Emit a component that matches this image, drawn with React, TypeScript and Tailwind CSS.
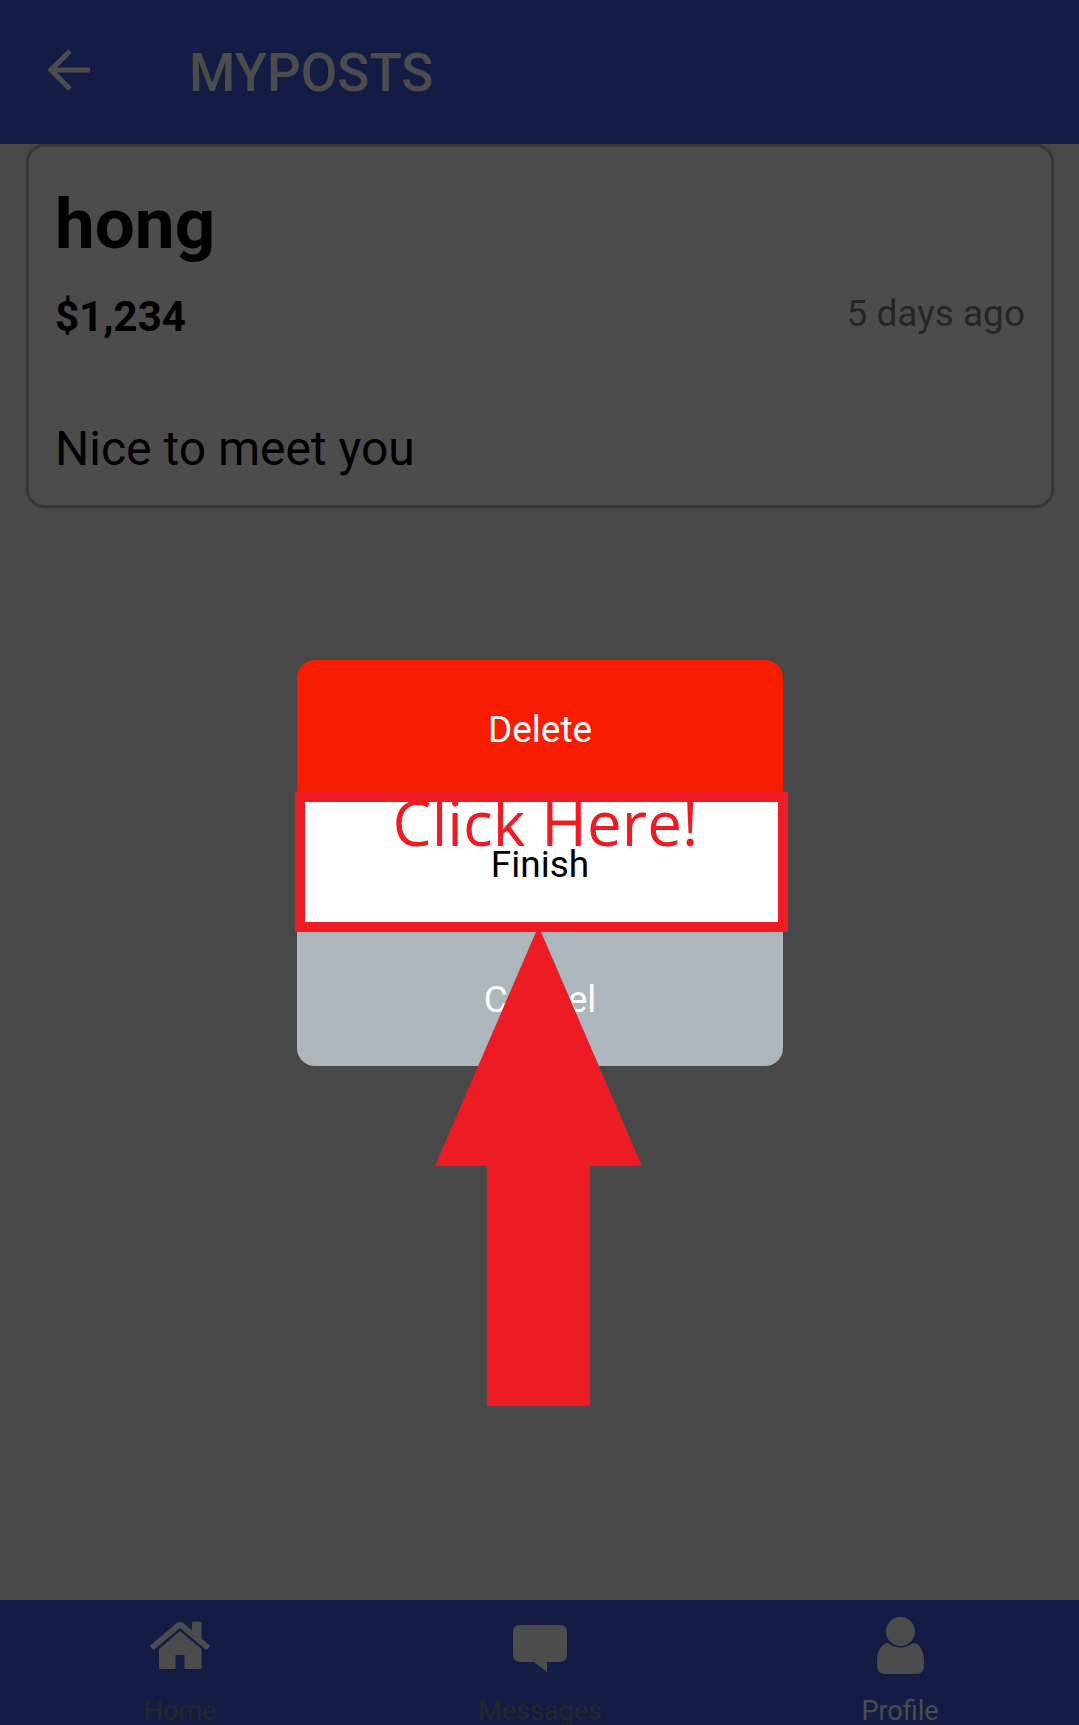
import type { ReactNode } from "react";

function BackIcon() {
  return (
    <svg viewBox="0 0 44 42" className="h-[42px] w-11" fill="none" stroke="currentColor" strokeWidth="5" aria-hidden="true">
      <path d="M43 21H5M23 2L4 21L23 40" />
    </svg>
  );
}

function HomeIcon() {
  return (
    <svg viewBox="0 0 60 60" className="size-[60px] shrink-0" fill="currentColor" aria-hidden="true">
      <path d="M26.5 7.2Q30 4.6 33.500 7.200L42 14.500V7Q42 5.500 43.500 5.500H50Q51.500 5.500 51.500 7V22.500L59.500 29.300Q60.300 30 59.600 30.800L57.200 33.500Q56.500 34.200 55.700 33.500L30 12L4.300 33.500Q3.500 34.200 2.800 33.500L0.400 30.800Q-0.300 30 0.500 29.300Z" />
      <path d="M30 15L51.500 33V51.500Q51.500 53 50 53H34.500V39H25.500V53H10.500Q9 53 9 51.500V33Z" />
    </svg>
  );
}

function MessageIcon() {
  return (
    <svg viewBox="0 0 60 60" className="size-[60px] shrink-0" fill="currentColor" aria-hidden="true">
      <path d="M10 9H50Q57 9 57 16V39Q57 46 50 46H37V56L24 46H10Q3 46 3 39V16Q3 9 10 9Z" />
    </svg>
  );
}

function ProfileIcon() {
  return (
    <svg viewBox="0 0 60 60" className="size-[60px] shrink-0" fill="currentColor" aria-hidden="true">
      <circle cx="30.500" cy="15.500" r="14.500" />
      <path d="M18 27Q30.500 36 43 27C49.500 27.500 54 35 54 45V49Q54 58 46 58H15Q7 58 7 49V45C7 35 11.500 27.500 18 27Z" />
    </svg>
  );
}

function Tab({ label, icon, active = false }: { label: string; icon: ReactNode; active?: boolean }) {
  return (
    <a href="#" aria-current={active ? "page" : undefined} className="flex flex-1 flex-col items-center gap-[19px] pt-4 text-[#4c4c4c]">
      {icon}
      <span className={active ? "text-[27px] leading-8" : "text-[27px] leading-8 text-[#262626]"}>{label}</span>
    </a>
  );
}

function ActionDialog() {
  return (
    <div className="fixed top-0 bottom-0 left-0 -right-px flex items-center justify-center">
      <div role="dialog" aria-label="Post actions" className="flex w-[45%] flex-col text-[37px] leading-[43px]">
        <button className="rounded-t-[18px] bg-[#f61d00] pt-12 pb-11 text-white">Delete</button>
        <div className="relative flex flex-col">
          <button className="bg-white pt-12 pb-11 text-black">Finish</button>
          <div className="pointer-events-none absolute -top-[3px] -right-[5px] -bottom-0.5 -left-0.5 z-10 border-10 border-[#ed1c24]">
            <p className="-mt-[22px] pl-2 text-center font-['Open_Sans',sans-serif] text-[62px] leading-[84px] text-[#ed1c24]">
              Click Here!
            </p>
            <svg viewBox="0 0 208 480" className="absolute top-full left-1/2 mt-1 h-[480px] w-52 -translate-x-[107px]" fill="#ed1c24" aria-hidden="true">
              <path d="M103.500 0L207 240H155V480H52V240H0Z" />
            </svg>
          </div>
        </div>
        <button className="rounded-b-[18px] bg-[#adb5bd] pt-12 pb-[45px] text-white">Cancel</button>
      </div>
    </div>
  );
}

export default function App() {
  return (
    <div className="h-screen overflow-hidden font-[Roboto,sans-serif] text-black">
      <div className="-mr-px flex h-full flex-col bg-[#484848]">
        <header className="flex h-36 shrink-0 items-center gap-[98px] bg-[#141c46] px-[47px] text-[#4c4c4c]">
          <button aria-label="Back" className="-mt-1">
            <BackIcon />
          </button>
          <h1 className="pt-0.5 text-[53px] leading-[62px] font-medium">MYPOSTS</h1>
        </header>
        <main className="flex-1 px-[26px]">
          <article className="rounded-[18px] border-3 border-[#35393b] bg-[#4c4c4c] px-[26px] pt-[35px] pb-[26px]">
            <h2 className="text-[71px] leading-[84px] font-bold">hong</h2>
            <div className="mt-[25px] flex items-start justify-between">
              <strong className="text-[42px] leading-[52px] font-bold">$1,234</strong>
              <time className="text-[37px] leading-[46px] text-[#262626]">5 days ago</time>
            </div>
            <p className="mt-[76px] text-5xl leading-[60px]">Nice to meet you</p>
          </article>
        </main>
        <nav aria-label="Main" className="flex h-[125px] shrink-0 bg-[#141c46]">
          <Tab label="Home" icon={<HomeIcon />} />
          <Tab label="Messages" icon={<MessageIcon />} />
          <Tab label="Profile" icon={<ProfileIcon />} active />
        </nav>
      </div>
      <ActionDialog />
    </div>
  );
}
